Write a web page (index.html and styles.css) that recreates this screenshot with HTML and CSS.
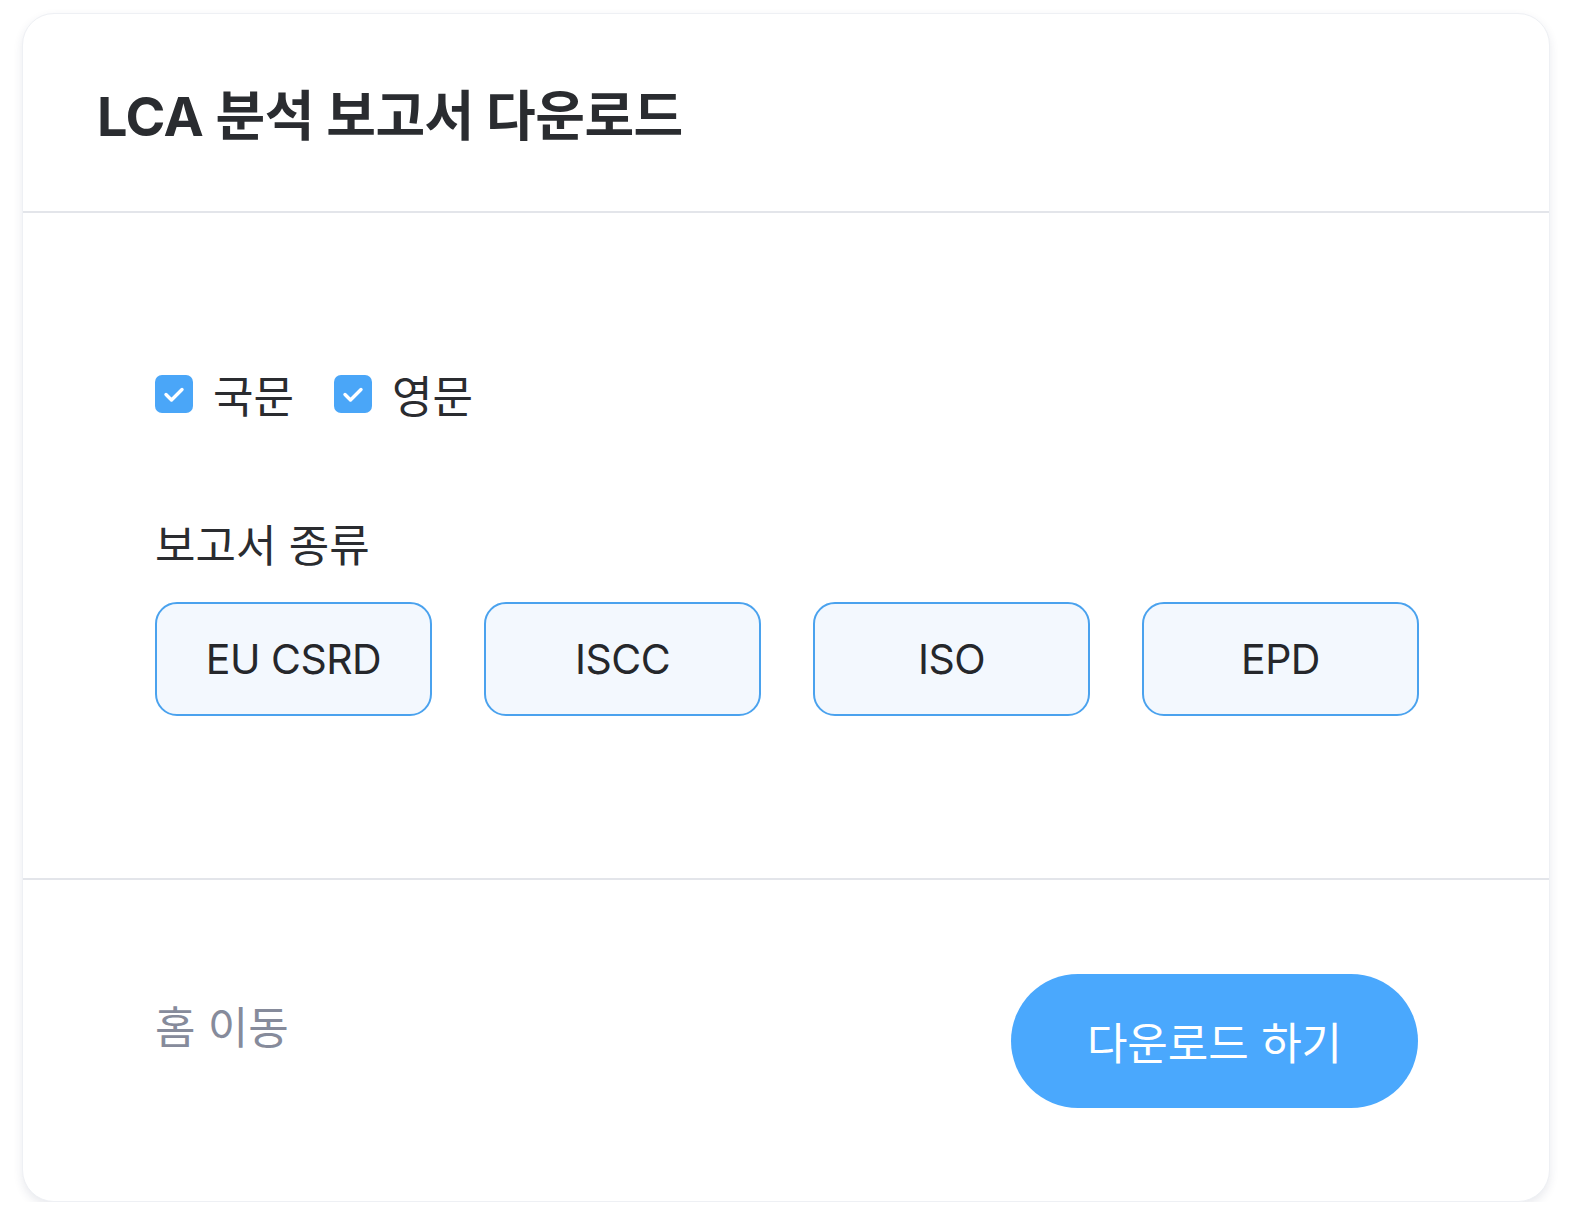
FILE: index.html
```html
<!DOCTYPE html>
<html lang="ko">
<head>
<meta charset="utf-8">
<link rel="stylesheet" href="styles.css">
</head>
<body>
<div class="card">
  <div class="card-header">
    <h1 class="title">LCA 분석 보고서 다운로드</h1>
  </div>
  <div class="card-body">
    <div class="langs">
      <label class="check"><span class="box"><svg viewBox="0 0 38 38" width="38" height="38"><path d="M11 19.5l5.5 5.5 10.5-10.5" fill="none" stroke="#fff" stroke-width="3.4" stroke-linecap="round" stroke-linejoin="round"/></svg></span><span class="check-text">국문</span></label>
      <label class="check"><span class="box"><svg viewBox="0 0 38 38" width="38" height="38"><path d="M11 19.5l5.5 5.5 10.5-10.5" fill="none" stroke="#fff" stroke-width="3.4" stroke-linecap="round" stroke-linejoin="round"/></svg></span><span class="check-text">영문</span></label>
    </div>
    <div class="section-label">보고서 종류</div>
    <div class="types">
      <button class="type">EU CSRD</button>
      <button class="type">ISCC</button>
      <button class="type">ISO</button>
      <button class="type">EPD</button>
    </div>
  </div>
  <div class="card-footer">
    <span class="home">홈 이동</span>
    <button class="download">다운로드 하기</button>
  </div>
</div>
</body>
</html>
```

FILE: styles.css
```css
html, body {
  margin: 0;
  padding: 0;
  background: #ffffff;
  overflow: hidden;
}
body {
  padding: 13px 0 0 22px;
  font-family: "Inter", "Noto Sans CJK KR", sans-serif;
  color: #25272b;
}
.card {
  width: 1528px;
  height: 1189px;
  box-sizing: border-box;
  border-radius: 32px;
  background: #fff;
  border: 1px solid #eef0f4;
  box-shadow: 0 4px 10px rgba(40, 50, 90, 0.10);
  display: flex;
  flex-direction: column;
  overflow: hidden;
}
.card-header {
  height: 199px;
  flex: none;
  box-sizing: border-box;
  border-bottom: 2px solid #e3e5ea;
  display: flex;
  align-items: center;
  padding-left: 74px;
}
.title {
  margin: 0;
  font-size: 54px;
  font-weight: 700;
  letter-spacing: -0.5px;
  color: #2a2c30;
  padding-top: 0;
}
.card-body {
  height: 667px;
  flex: none;
  box-sizing: border-box;
  border-bottom: 2px solid #e3e5ea;
  padding: 159px 120px 0 132px;
}
.langs {
  display: flex;
  gap: 40px;
  align-items: center;
}
.check {
  display: flex;
  align-items: center;
  gap: 20px;
}
.box {
  width: 38px;
  height: 38px;
  border-radius: 7px;
  background: #4aa6f8;
  display: flex;
  align-items: center;
  justify-content: center;
}
.check-text {
  font-size: 44px;
  line-height: 44px;
  color: #2a2c30;
  font-family: "Noto Sans CJK KR", sans-serif;
}
.section-label {
  margin-top: 103px;
  font-size: 44px;
  line-height: 48px;
  color: #2a2c30;
  font-family: "Noto Sans CJK KR", sans-serif;
}
.types {
  margin-top: 35px;
  display: flex;
  gap: 52px;
}
.type {
  flex: none;
  width: 277px;
  height: 114px;
  box-sizing: border-box;
  border: 2px solid #4aa2ee;
  border-radius: 22px;
  background: #f3f8fe;
  font-family: "Inter", sans-serif;
  font-size: 41px;
  color: #25272b;
  letter-spacing: -0.5px;
}
.card-footer {
  flex: 1;
  display: flex;
  align-items: center;
  justify-content: space-between;
  padding: 0 131px 0 132px;
}
.home {
  font-size: 44px;
  color: #868b9b;
  font-family: "Noto Sans CJK KR", sans-serif;
  margin-top: -32px;
}
.download {
  flex: none;
  width: 407px;
  height: 134px;
  border: none;
  border-radius: 67px;
  background: #4aa8fd;
  color: #fff;
  font-family: "Noto Sans CJK KR", sans-serif;
  font-size: 44px;
}
```
